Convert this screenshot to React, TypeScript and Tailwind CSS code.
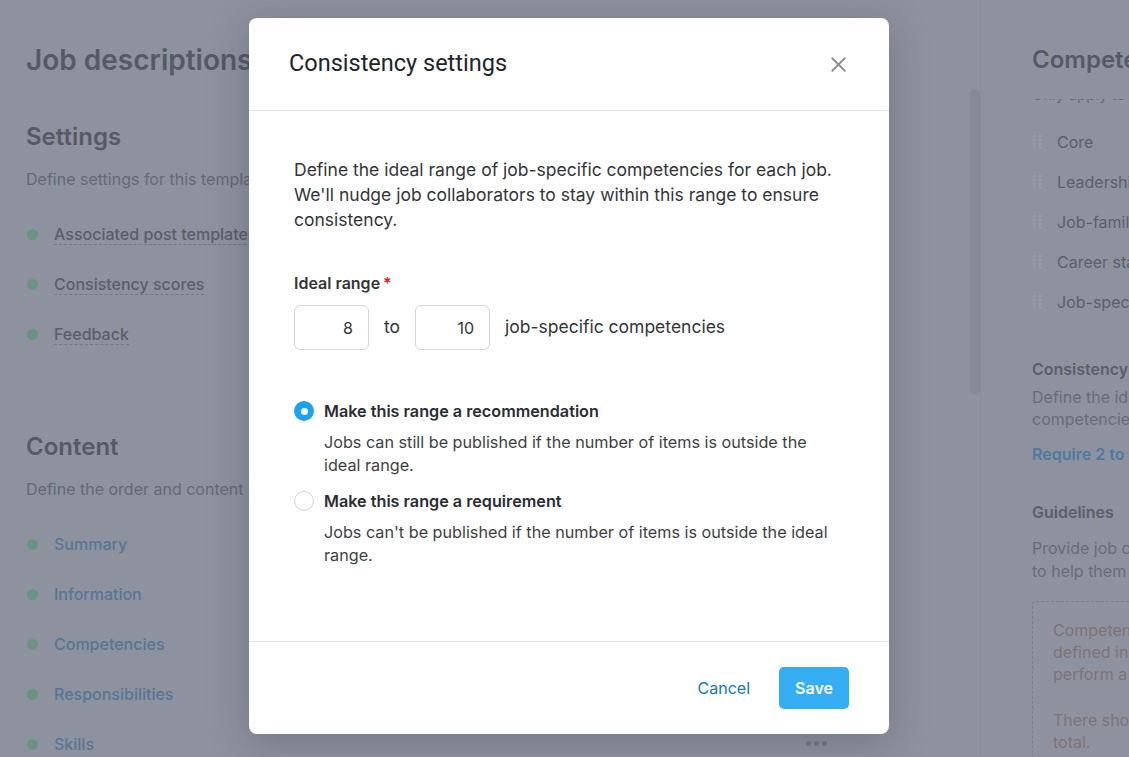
import { X } from "lucide-react";

const settingsItems = ["Associated post templates", "Consistency scores", "Feedback"];
const contentItems = ["Summary", "Information", "Competencies", "Responsibilities", "Skills"];
const competencyTypes = ["Core", "Leadership", "Job-family", "Career stage", "Job-specific"];

function Grip() {
    return (
        <svg width="10" height="16" viewBox="0 0 10 16" className="shrink-0">
            {[2, 6, 10, 14].map((y) => (
                <g key={y}>
                    <circle cx="2" cy={y} r="1.6" fill="#989ca8" />
                    <circle cx="8" cy={y} r="1.6" fill="#989ca8" />
                </g>
            ))}
        </svg>
    );
}

function Radio({ checked }: { checked: boolean }) {
    if (checked) {
        return (
            <span className="w-5 h-5 rounded-full bg-[#1ea1f1] flex items-center justify-center shrink-0">
                <span className="block w-[7px] h-[7px] rounded-full bg-white" />
            </span>
        );
    }
    return <span className="block w-5 h-5 rounded-full border border-[#cfd3d8] bg-white shrink-0" />;
}

export default function App() {
    return (
        <div className="relative w-full h-screen overflow-hidden bg-[#8e929e] font-['Inter',sans-serif]">
            {/* page behind the dialog, already dimmed */}
            <div className="flex h-full">
                <div className="flex-1 flex">
                    <div className="flex-1 pl-[26px] pt-[40px]">
                        <h1 className="text-[28px] leading-[40px] font-semibold text-[#565a66] whitespace-nowrap">Job descriptions template</h1>

                        <h2 className="mt-[41px] text-[24px] leading-[32px] font-semibold text-[#565a66]">Settings</h2>
                        <p className="mt-[16px] text-[16px] leading-[20px] text-[#656975] whitespace-nowrap">Define settings for this template</p>
                        <ul className="mt-[34px] flex flex-col gap-[28px]">
                            {settingsItems.map((item) => (
                                <li key={item} className="flex items-center h-[22px]">
                                    <span className="w-[11px] h-[11px] rounded-full bg-[#6a9480] ml-[1px]" />
                                    <span className="ml-[16px] text-[16px] font-medium text-[#5a5e6a] border-b border-dashed border-[#737784] leading-[20px] whitespace-nowrap">{item}</span>
                                </li>
                            ))}
                        </ul>

                        <h2 className="mt-[86px] text-[24px] leading-[32px] font-semibold text-[#565a66]">Content</h2>
                        <p className="mt-[16px] text-[16px] leading-[20px] text-[#656975] whitespace-nowrap">Define the order and content of this template</p>
                        <ul className="mt-[34px] flex flex-col gap-[28px]">
                            {contentItems.map((item) => (
                                <li key={item} className="flex items-center h-[22px]">
                                    <span className="w-[11px] h-[11px] rounded-full bg-[#6a9480] ml-[1px]" />
                                    <span className="ml-[16px] text-[16px] font-medium text-[#557696] leading-[20px]">{item}</span>
                                </li>
                            ))}
                        </ul>
                    </div>
                    <div className="w-[170px] flex flex-col justify-end pb-[11px]">
                        <div className="flex gap-[3px] ml-[6px]">
                            <span className="w-[5px] h-[5px] rounded-full bg-[#767a86]" />
                            <span className="w-[5px] h-[5px] rounded-full bg-[#767a86]" />
                            <span className="w-[5px] h-[5px] rounded-full bg-[#767a86]" />
                        </div>
                    </div>
                    <div className="w-[10px] pt-[89px]">
                        <div className="h-[306px] rounded-full bg-[#868a96]" />
                    </div>
                </div>

                <div className="w-[149px] border-l border-[#888c98] pl-[51px] pt-[44px] overflow-hidden">
                    <h2 className="text-[24px] leading-[32px] font-semibold text-[#565a66] whitespace-nowrap">Competencies</h2>
                    <div className="h-[6px] overflow-hidden mt-[23px]">
                        <p className="text-[15px] leading-[20px] text-[#686c78] whitespace-nowrap -mt-[14px]">Only apply to</p>
                    </div>
                    <ul className="mt-[26px] flex flex-col gap-[18px]">
                        {competencyTypes.map((t) => (
                            <li key={t} className="flex items-center gap-[15px] h-[22px]">
                                <Grip />
                                <span className="text-[16px] text-[#5b5f6b] whitespace-nowrap">{t}</span>
                            </li>
                        ))}
                    </ul>
                    <p className="mt-[46px] text-[16px] font-semibold text-[#5b5f6b] whitespace-nowrap leading-[20px]">Consistency scores</p>
                    <p className="mt-[7px] text-[16px] leading-[22px] text-[#686c78] whitespace-nowrap">Define the ideal range<br />competencies</p>
                    <p className="mt-[14px] text-[16px] font-semibold text-[#4f7aa0] whitespace-nowrap leading-[20px]">Require 2 to 10</p>
                    <p className="mt-[38px] text-[16px] font-semibold text-[#5b5f6b] whitespace-nowrap leading-[20px]">Guidelines</p>
                    <p className="mt-[15px] text-[16px] leading-[23px] text-[#686c78] whitespace-nowrap">Provide job collaborators<br />to help them</p>
                    <div className="mt-[18px] border border-dashed border-r-0 border-[#7a7e8a] rounded-l-[4px] pl-[20px] pt-[17px] pb-[6px]">
                        <p className="text-[16px] leading-[22px] text-[#7d7378] whitespace-nowrap">Competencies<br />defined in<br />perform a</p>
                        <p className="mt-[24px] text-[16px] leading-[22px] text-[#7d7378] whitespace-nowrap">There should<br />total.</p>
                    </div>
                </div>
            </div>

            {/* dialog */}
            <div className="absolute inset-0 flex justify-center pt-[18px] pl-[9px]">
                <div className="w-[640px] h-[716px] bg-white rounded-[8px] shadow-[0_8px_40px_rgba(30,35,50,0.25)] flex flex-col">
                    <div className="h-[93px] flex items-center justify-between pl-[40px] pr-[38px] border-b border-[#e6e7ea] shrink-0">
                        <h3 className="text-[23.5px] text-[#222428] font-['Roboto',sans-serif]">Consistency settings</h3>
                        <X size={25} strokeWidth={1.7} className="text-[#8a8c90]" />
                    </div>

                    <div className="flex-1 pl-[45px] pr-[45px] pt-[46px]">
                        <p className="text-[17.5px] leading-[25px] text-[#333539]">
                            Define the ideal range of job-specific competencies for each job. We'll nudge job collaborators to stay within this range to ensure consistency.
                        </p>

                        <p className="mt-[40px] text-[16px] font-semibold text-[#333539] leading-[22px]">
                            Ideal range<span className="text-[#d92020] ml-[3px]">*</span>
                        </p>
                        <div className="mt-[11px] flex items-center">
                            <div className="w-[75px] h-[45px] border border-[#d4d6db] rounded-[6px] flex items-center justify-end pr-[15px] text-[16px] text-[#333539]">8</div>
                            <span className="mx-[15px] text-[17.5px] text-[#333539]">to</span>
                            <div className="w-[75px] h-[45px] border border-[#d4d6db] rounded-[6px] flex items-center justify-end pr-[15px] text-[16px] text-[#333539]">10</div>
                            <span className="ml-[15px] text-[17.5px] text-[#333539]">job-specific competencies</span>
                        </div>

                        <div className="mt-[50px] flex flex-col gap-[13px]">
                            <div className="flex gap-[10px]">
                                <div className="pt-[1px]"><Radio checked /></div>
                                <div>
                                    <p className="text-[16.2px] font-semibold text-[#2b2d31] leading-[22px]">Make this range a recommendation</p>
                                    <p className="mt-[9px] text-[16.2px] leading-[23px] text-[#3d3f44]">Jobs can still be published if the number of items is outside the ideal range.</p>
                                </div>
                            </div>
                            <div className="flex gap-[10px]">
                                <div className="pt-[1px]"><Radio checked={false} /></div>
                                <div>
                                    <p className="text-[16.2px] font-semibold text-[#2b2d31] leading-[22px]">Make this range a requirement</p>
                                    <p className="mt-[9px] text-[16.2px] leading-[23px] text-[#3d3f44]">Jobs can't be published if the number of items is outside the ideal range.</p>
                                </div>
                            </div>
                        </div>
                    </div>

                    <div className="h-[93px] border-t border-[#e6e7ea] flex items-center justify-end gap-[29px] pr-[40px] shrink-0">
                        <button className="text-[16px] text-[#1479b8]">Cancel</button>
                        <button className="w-[70px] h-[42px] rounded-[5px] bg-[#36aef4] text-white text-[16px] font-semibold">Save</button>
                    </div>
                </div>
            </div>
        </div>
    );
}
